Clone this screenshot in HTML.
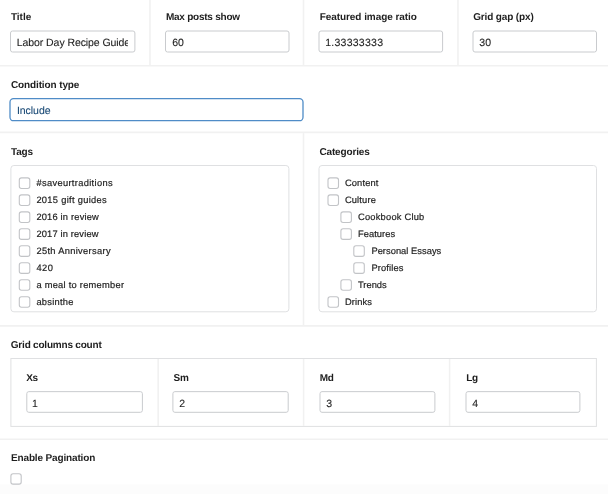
<!DOCTYPE html>
<html><head><meta charset="utf-8"><style>
html,body{margin:0;padding:0;}
body{width:608px;height:494px;position:relative;overflow:hidden;background:#fff;font-family:"Liberation Sans",sans-serif;text-rendering:geometricPrecision;}
#w{position:absolute;left:0;top:0;width:608px;height:494px;will-change:transform;}
svg{position:absolute;left:0;top:0;}
.t{position:absolute;white-space:nowrap;line-height:1;}
.c{position:absolute;top:0;height:494px;overflow:hidden;}
</style></head><body><div id="w">
<svg width="608" height="494" viewBox="0 0 608 494">
<rect x="0" y="484.5" width="608" height="9.5" fill="#fcfcfc"/>
<line x1="0.00" y1="65.70" x2="608.00" y2="65.70" stroke="#f1f1f1" stroke-width="1.6"/>
<line x1="0.00" y1="132.40" x2="608.00" y2="132.40" stroke="#f1f1f1" stroke-width="1.6"/>
<line x1="0.00" y1="325.90" x2="608.00" y2="325.90" stroke="#f1f1f1" stroke-width="1.6"/>
<line x1="0.00" y1="439.30" x2="608.00" y2="439.30" stroke="#f1f1f1" stroke-width="1.6"/>
<line x1="150.00" y1="0.00" x2="150.00" y2="64.90" stroke="#f1f1f1" stroke-width="1.6"/>
<line x1="303.50" y1="0.00" x2="303.50" y2="64.90" stroke="#f1f1f1" stroke-width="1.6"/>
<line x1="458.00" y1="0.00" x2="458.00" y2="64.90" stroke="#f1f1f1" stroke-width="1.6"/>
<line x1="303.50" y1="133.20" x2="303.50" y2="325.10" stroke="#f1f1f1" stroke-width="1.6"/>
<rect x="10.50" y="31.00" width="124.40" height="21.00" rx="2.0" fill="#fff" stroke="#c9cbce" stroke-width="1.0"/>
<rect x="165.50" y="31.00" width="123.50" height="21.00" rx="2.0" fill="#fff" stroke="#c9cbce" stroke-width="1.0"/>
<rect x="319.00" y="31.00" width="123.60" height="21.00" rx="2.0" fill="#fff" stroke="#c9cbce" stroke-width="1.0"/>
<rect x="473.00" y="31.00" width="123.50" height="21.00" rx="2.0" fill="#fff" stroke="#c9cbce" stroke-width="1.0"/>
<rect x="10.00" y="98.60" width="293.00" height="22.10" rx="3.5" fill="#fff" stroke="#4f8cc7" stroke-width="1.3"/>
<rect x="10.90" y="165.50" width="278.00" height="146.30" rx="3" fill="none" stroke="#dfe0e2" stroke-width="1.0"/>
<rect x="319.00" y="165.50" width="277.50" height="146.30" rx="3" fill="none" stroke="#dfe0e2" stroke-width="1.0"/>
<rect x="19.30" y="177.90" width="10.50" height="10.60" rx="2.2" fill="#fff" stroke="#c2c4c7" stroke-width="1.1"/>
<rect x="19.30" y="194.87" width="10.50" height="10.60" rx="2.2" fill="#fff" stroke="#c2c4c7" stroke-width="1.1"/>
<rect x="19.30" y="211.84" width="10.50" height="10.60" rx="2.2" fill="#fff" stroke="#c2c4c7" stroke-width="1.1"/>
<rect x="19.30" y="228.81" width="10.50" height="10.60" rx="2.2" fill="#fff" stroke="#c2c4c7" stroke-width="1.1"/>
<rect x="19.30" y="245.78" width="10.50" height="10.60" rx="2.2" fill="#fff" stroke="#c2c4c7" stroke-width="1.1"/>
<rect x="19.30" y="262.75" width="10.50" height="10.60" rx="2.2" fill="#fff" stroke="#c2c4c7" stroke-width="1.1"/>
<rect x="19.30" y="279.72" width="10.50" height="10.60" rx="2.2" fill="#fff" stroke="#c2c4c7" stroke-width="1.1"/>
<rect x="19.30" y="296.69" width="10.50" height="10.60" rx="2.2" fill="#fff" stroke="#c2c4c7" stroke-width="1.1"/>
<rect x="328.00" y="177.90" width="10.50" height="10.60" rx="2.2" fill="#fff" stroke="#c2c4c7" stroke-width="1.1"/>
<rect x="328.00" y="194.87" width="10.50" height="10.60" rx="2.2" fill="#fff" stroke="#c2c4c7" stroke-width="1.1"/>
<rect x="340.90" y="211.84" width="10.50" height="10.60" rx="2.2" fill="#fff" stroke="#c2c4c7" stroke-width="1.1"/>
<rect x="340.90" y="228.81" width="10.50" height="10.60" rx="2.2" fill="#fff" stroke="#c2c4c7" stroke-width="1.1"/>
<rect x="353.80" y="245.78" width="10.50" height="10.60" rx="2.2" fill="#fff" stroke="#c2c4c7" stroke-width="1.1"/>
<rect x="353.80" y="262.75" width="10.50" height="10.60" rx="2.2" fill="#fff" stroke="#c2c4c7" stroke-width="1.1"/>
<rect x="340.90" y="279.72" width="10.50" height="10.60" rx="2.2" fill="#fff" stroke="#c2c4c7" stroke-width="1.1"/>
<rect x="328.00" y="296.69" width="10.50" height="10.60" rx="2.2" fill="#fff" stroke="#c2c4c7" stroke-width="1.1"/>
<rect x="10.90" y="358.50" width="585.50" height="67.90" rx="0" fill="none" stroke="#dfe0e2" stroke-width="1.0"/>
<line x1="158.20" y1="359.00" x2="158.20" y2="425.90" stroke="#f1f1f1" stroke-width="1.6"/>
<line x1="303.60" y1="359.00" x2="303.60" y2="425.90" stroke="#f1f1f1" stroke-width="1.6"/>
<line x1="449.60" y1="359.00" x2="449.60" y2="425.90" stroke="#f1f1f1" stroke-width="1.6"/>
<rect x="26.80" y="391.65" width="115.60" height="20.65" rx="2.0" fill="#fff" stroke="#c9cbce" stroke-width="1.0"/>
<rect x="172.90" y="391.65" width="115.30" height="20.65" rx="2.0" fill="#fff" stroke="#c9cbce" stroke-width="1.0"/>
<rect x="320.00" y="391.65" width="114.90" height="20.65" rx="2.0" fill="#fff" stroke="#c9cbce" stroke-width="1.0"/>
<rect x="466.00" y="391.65" width="113.90" height="20.65" rx="2.0" fill="#fff" stroke="#c9cbce" stroke-width="1.0"/>
<rect x="10.90" y="473.70" width="10.30" height="10.40" rx="2.2" fill="#fff" stroke="#c2c4c7" stroke-width="1.1"/>
</svg>
<div class="t" style="left:10.90px;top:13px;font-size:10.0px;font-weight:bold;color:#1e1e1e;">Title</div>
<div class="t" style="left:165.90px;top:13px;font-size:10.0px;font-weight:bold;letter-spacing:-0.238px;color:#1e1e1e;">Max posts show</div>
<div class="t" style="left:319.70px;top:13px;font-size:10.0px;font-weight:bold;letter-spacing:-0.063px;color:#1e1e1e;">Featured image ratio</div>
<div class="t" style="left:473.20px;top:13px;font-size:10.0px;font-weight:bold;letter-spacing:-0.142px;color:#1e1e1e;">Grid gap (px)</div>
<div class="t" style="left:10.90px;top:81px;font-size:10.0px;font-weight:bold;letter-spacing:-0.115px;color:#1e1e1e;">Condition type</div>
<div class="t" style="left:11.10px;top:148px;font-size:10.0px;font-weight:bold;letter-spacing:-0.25px;color:#1e1e1e;">Tags</div>
<div class="t" style="left:319.40px;top:148px;font-size:10.0px;font-weight:bold;letter-spacing:-0.144px;color:#1e1e1e;">Categories</div>
<div class="t" style="left:10.80px;top:341px;font-size:10.0px;font-weight:bold;letter-spacing:-0.206px;color:#1e1e1e;">Grid columns count</div>
<div class="t" style="left:11.00px;top:454px;font-size:10.0px;font-weight:bold;letter-spacing:-0.15px;color:#1e1e1e;">Enable Pagination</div>
<div class="t" style="left:26.20px;top:374px;font-size:10.0px;font-weight:bold;letter-spacing:-0.25px;color:#1e1e1e;">Xs</div>
<div class="t" style="left:173.50px;top:374px;font-size:10.0px;font-weight:bold;letter-spacing:-0.25px;color:#1e1e1e;">Sm</div>
<div class="t" style="left:319.70px;top:374px;font-size:10.0px;font-weight:bold;letter-spacing:-0.25px;color:#1e1e1e;">Md</div>
<div class="t" style="left:466.20px;top:374px;font-size:10.0px;font-weight:bold;letter-spacing:-0.25px;color:#1e1e1e;">Lg</div>
<div class="c" style="left:11.5px;width:116.70px;"><div class="t" style="left:5.30px;top:38px;font-size:10.5px;letter-spacing:-0.076px;-webkit-text-stroke:0.1px;color:#1e1e1e;">Labor Day Recipe Guide</div></div>
<div class="t" style="left:172.20px;top:38px;font-size:10.5px;-webkit-text-stroke:0.1px;color:#1e1e1e;">60</div>
<div class="t" style="left:325.20px;top:38px;font-size:10.5px;letter-spacing:0.256px;-webkit-text-stroke:0.1px;color:#1e1e1e;">1.33333333</div>
<div class="t" style="left:479.30px;top:38px;font-size:10.5px;-webkit-text-stroke:0.1px;color:#1e1e1e;">30</div>
<div class="t" style="left:16.90px;top:106px;font-size:10.5px;letter-spacing:-0.033px;-webkit-text-stroke:0.1px;color:#1a4a76;">Include</div>
<div class="t" style="left:31.90px;top:399px;font-size:10.5px;-webkit-text-stroke:0.1px;color:#1e1e1e;">1</div>
<div class="t" style="left:179.30px;top:399px;font-size:10.5px;-webkit-text-stroke:0.1px;color:#1e1e1e;">2</div>
<div class="t" style="left:326.30px;top:399px;font-size:10.5px;-webkit-text-stroke:0.1px;color:#1e1e1e;">3</div>
<div class="t" style="left:472.30px;top:399px;font-size:10.5px;-webkit-text-stroke:0.1px;color:#1e1e1e;">4</div>
<div class="t" style="left:36.40px;top:179px;font-size:9.3px;letter-spacing:0.338px;-webkit-text-stroke:0.2px;color:#1e1e1e;">#saveurtraditions</div>
<div class="t" style="left:36.40px;top:196px;font-size:9.3px;letter-spacing:0.307px;-webkit-text-stroke:0.2px;color:#1e1e1e;">2015 gift guides</div>
<div class="t" style="left:36.40px;top:213px;font-size:9.3px;letter-spacing:0.192px;-webkit-text-stroke:0.2px;color:#1e1e1e;">2016 in review</div>
<div class="t" style="left:36.40px;top:230px;font-size:9.3px;letter-spacing:0.162px;-webkit-text-stroke:0.2px;color:#1e1e1e;">2017 in review</div>
<div class="t" style="left:36.40px;top:247px;font-size:9.3px;letter-spacing:0.327px;-webkit-text-stroke:0.2px;color:#1e1e1e;">25th Anniversary</div>
<div class="t" style="left:36.40px;top:264px;font-size:9.3px;letter-spacing:0.5px;-webkit-text-stroke:0.2px;color:#1e1e1e;">420</div>
<div class="t" style="left:36.40px;top:281px;font-size:9.3px;letter-spacing:0.259px;-webkit-text-stroke:0.2px;color:#1e1e1e;">a meal to remember</div>
<div class="t" style="left:36.40px;top:298px;font-size:9.3px;letter-spacing:0.257px;-webkit-text-stroke:0.2px;color:#1e1e1e;">absinthe</div>
<div class="t" style="left:344.90px;top:179px;font-size:9.3px;letter-spacing:0.167px;-webkit-text-stroke:0.2px;color:#1e1e1e;">Content</div>
<div class="t" style="left:344.90px;top:196px;font-size:9.3px;letter-spacing:0.167px;-webkit-text-stroke:0.2px;color:#1e1e1e;">Culture</div>
<div class="t" style="left:358.00px;top:213px;font-size:9.3px;letter-spacing:0.225px;-webkit-text-stroke:0.2px;color:#1e1e1e;">Cookbook Club</div>
<div class="t" style="left:358.00px;top:230px;font-size:9.3px;letter-spacing:0.057px;-webkit-text-stroke:0.2px;color:#1e1e1e;">Features</div>
<div class="t" style="left:371.40px;top:247px;font-size:9.3px;letter-spacing:0.043px;-webkit-text-stroke:0.2px;color:#1e1e1e;">Personal Essays</div>
<div class="t" style="left:371.40px;top:264px;font-size:9.3px;letter-spacing:0.143px;-webkit-text-stroke:0.2px;color:#1e1e1e;">Profiles</div>
<div class="t" style="left:358.00px;top:281px;font-size:9.3px;letter-spacing:0.02px;-webkit-text-stroke:0.2px;color:#1e1e1e;">Trends</div>
<div class="t" style="left:344.90px;top:298px;font-size:9.3px;letter-spacing:0.14px;-webkit-text-stroke:0.2px;color:#1e1e1e;">Drinks</div>
</div></body></html>
